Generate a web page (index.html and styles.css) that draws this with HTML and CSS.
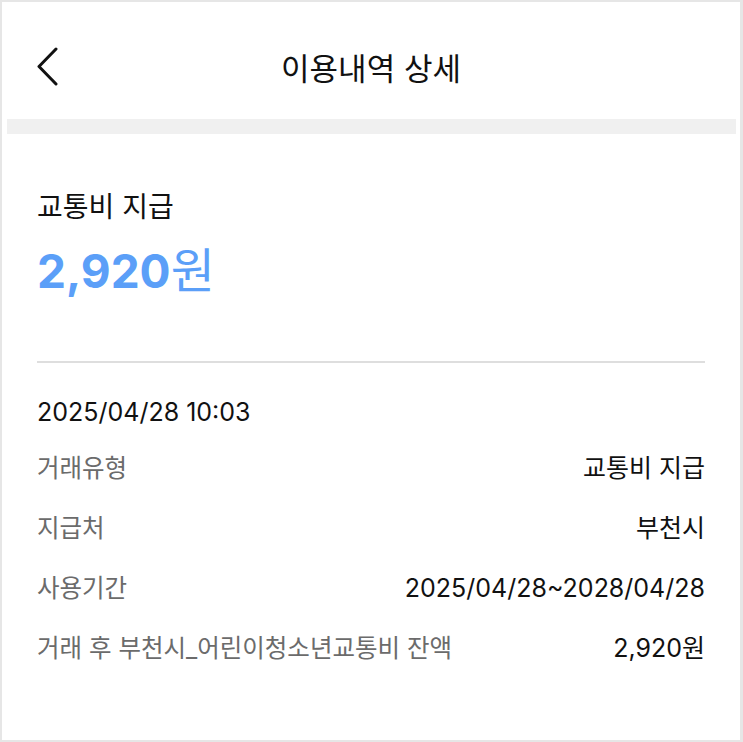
FILE: index.html
```html
<!DOCTYPE html>
<html lang="ko">
<head>
    <meta charset="UTF-8">
    <meta name="viewport" content="width=device-width, initial-scale=1.0">
    <title>이용내역 상세</title>
    <link rel="stylesheet" href="styles.css">
</head>
<body>
<div class="screen">
    <header class="top-bar">
        <button class="back-btn" aria-label="뒤로">
            <svg width="24" height="39" viewBox="0 0 24 39">
                <polyline points="21,2 4,19.5 21,37" fill="none" stroke="#111" stroke-width="3" stroke-linecap="round" stroke-linejoin="round"/>
            </svg>
        </button>
        <h1 class="title">이용내역 상세</h1>
        <span></span>
    </header>

    <div class="band"></div>

    <section class="summary">
        <p class="summary-type">교통비 지급</p>
        <p class="summary-amount"><span class="num">2,920</span><span class="unit">원</span></p>
    </section>

    <hr class="divider">

    <section class="detail">
        <div class="detail-date">2025/04/28 10:03</div>
        <div class="detail-list">
            <div class="detail-row">
                <span class="label">거래유형</span>
                <span class="value">교통비 지급</span>
            </div>
            <div class="detail-row">
                <span class="label">지급처</span>
                <span class="value">부천시</span>
            </div>
            <div class="detail-row">
                <span class="label">사용기간</span>
                <span class="value">2025/04/28~2028/04/28</span>
            </div>
            <div class="detail-row">
                <span class="label">거래 후 부천시_어린이청소년교통비 잔액</span>
                <span class="value">2,920원</span>
            </div>
        </div>
    </section>
</div>
</body>
</html>
```

FILE: styles.css
```css
* {
    box-sizing: border-box;
}

body {
    margin: 0;
    font-family: Inter, "Noto Sans CJK KR", sans-serif;
    color: #111;
    background-color: #fff;
}

.screen {
    width: 743px;
    height: 742px;
    border: 2px solid #e6e6e6;
    border-right-width: 3px;
    overflow: hidden;
}

.top-bar {
    display: grid;
    grid-template-columns: 1fr auto 1fr;
    align-items: center;
    height: 117px;
    padding: 12px 33px 0;
}

.back-btn {
    justify-self: start;
    display: flex;
    padding: 0;
    border: none;
    background: none;
    cursor: pointer;
}

.title {
    margin: 0;
    font-size: 31px;
    font-weight: 400;
}

.band {
    height: 15px;
    margin: 0 4px 0 5px;
    background-color: #f0f0f0;
}

.summary {
    padding: 55px 35px 0;
}

.summary p {
    margin: 0;
}

.summary-type {
    font-size: 28px;
    line-height: 36px;
}

.summary-amount {
    margin-top: 14px !important;
    line-height: 64px;
    color: #5b9ff8;
}

.summary-amount .num {
    font-size: 46px;
    font-weight: 700;
}

.summary-amount .unit {
    font-size: 48px;
    font-weight: 400;
}

.divider {
    height: 2px;
    margin: 47px 35px 0;
    border: none;
    background-color: #dedede;
}

.detail {
    padding: 34px 35px 0;
}

.detail-date {
    font-size: 25px;
    line-height: 30px;
}

.detail-list {
    display: flex;
    flex-direction: column;
    gap: 30px;
    margin-top: 26px;
}

.detail-row {
    display: flex;
    justify-content: space-between;
    align-items: center;
    line-height: 30px;
}

.label {
    font-size: 24.5px;
    color: #6b6b6b;
}

.value {
    font-size: 25px;
    color: #111;
}
```
